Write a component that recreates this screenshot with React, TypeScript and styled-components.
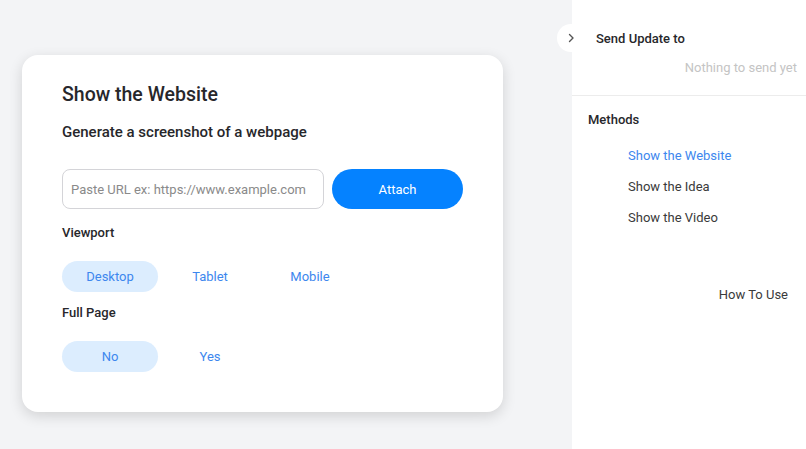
import styled, { createGlobalStyle } from "styled-components";

const GlobalStyle = createGlobalStyle`
  html, body {
    margin: 0;
    padding: 0;
    font-family: Roboto, "Liberation Sans", Arial, sans-serif;
  }
  * { box-sizing: border-box; }
`;

const Wrapper = styled.div`
  width: 806px;
  height: 449px;
  display: flex;
  background-color: #f3f4f6;
  overflow: hidden;
`;

const Main = styled.main`
  flex: 1;
  padding: 55px 0 0 22px;
`;

const Card = styled.section`
  width: 481px;
  height: 357px;
  background: #fff;
  border-radius: 16px;
  box-shadow: 0 4px 14px rgba(0, 0, 0, 0.14);
  padding: 28px 40px 40px;
  display: flex;
  flex-direction: column;
`;

const Title = styled.h1`
  margin: 0;
  font-size: 19.5px;
  font-weight: 500;
  line-height: 24px;
  color: #27272b;
`;

const Subtitle = styled.h2`
  margin: 13px 0 0;
  font-size: 15px;
  font-weight: 500;
  line-height: 24px;
  color: #27272b;
`;

const UrlRow = styled.div`
  display: flex;
  gap: 8px;
  margin-top: 25px;
`;

const UrlInput = styled.input`
  width: 262px;
  height: 40px;
  border: 1px solid #d4d4d8;
  border-radius: 8px;
  padding: 0 8px;
  font-family: inherit;
  font-size: 13px;
  color: #333;
  outline: none;
  &::placeholder { color: #8a8a8a; }
`;

const AttachButton = styled.button`
  width: 131px;
  height: 40px;
  border: none;
  border-radius: 20px;
  background: #0582ff;
  color: #fff;
  font-family: inherit;
  font-size: 13px;
`;

const Label = styled.div<{ $gap: number }>`
  margin-top: ${(p) => p.$gap}px;
  font-size: 13px;
  font-weight: 500;
  line-height: 16px;
  color: #27272b;
`;

const Segment = styled.div`
  display: flex;
  gap: 4px;
  margin-top: 20px;
`;

const Pill = styled.button<{ $active?: boolean }>`
  width: 96px;
  height: 31px;
  border: none;
  border-radius: 16px;
  background: ${(p) => (p.$active ? "#dcedfe" : "transparent")};
  color: #3d87ee;
  font-family: inherit;
  font-size: 13px;
`;

const Sidebar = styled.aside`
  position: relative;
  width: 234px;
  background: #fff;
  display: flex;
  flex-direction: column;
`;

const Toggle = styled.div`
  position: absolute;
  left: -15px;
  top: 24px;
  width: 28px;
  height: 28px;
  border-radius: 50%;
  background: #fff;
  display: flex;
  align-items: center;
  justify-content: center;
`;

const SendBlock = styled.div`
  padding: 31px 9px 0 24px;
  height: 96px;
  border-bottom: 1px solid #ececec;
`;

const SectionTitle = styled.div`
  font-size: 13px;
  font-weight: 500;
  line-height: 16px;
  color: #27272b;
`;

const Empty = styled.div`
  margin-top: 13px;
  text-align: right;
  font-size: 13px;
  line-height: 16px;
  color: #c4c4c4;
`;

const MethodsBlock = styled.div`
  padding: 16px 18px 0 16px;
  display: flex;
  flex-direction: column;
`;

const MethodList = styled.ul`
  list-style: none;
  margin: 20px 0 0;
  padding: 0 0 0 40px;
  display: flex;
  flex-direction: column;
  gap: 15px;
`;

const MethodItem = styled.li<{ $active?: boolean }>`
  font-size: 13px;
  line-height: 16px;
  color: ${(p) => (p.$active ? "#3d87ee" : "#3a3a3a")};
`;

const HowTo = styled.div`
  margin-top: 61px;
  text-align: right;
  font-size: 13px;
  line-height: 16px;
  color: #3a3a3a;
`;

const App = () => {
  return (
    <Wrapper>
      <GlobalStyle />
      <Main>
        <Card>
          <Title>Show the Website</Title>
          <Subtitle>Generate a screenshot of a webpage</Subtitle>
          <UrlRow>
            <UrlInput placeholder="Paste URL ex: https://www.example.com" />
            <AttachButton>Attach</AttachButton>
          </UrlRow>
          <Label $gap={16}>Viewport</Label>
          <Segment>
            <Pill $active>Desktop</Pill>
            <Pill>Tablet</Pill>
            <Pill>Mobile</Pill>
          </Segment>
          <Label $gap={13}>Full Page</Label>
          <Segment>
            <Pill $active>No</Pill>
            <Pill>Yes</Pill>
          </Segment>
        </Card>
      </Main>
      <Sidebar>
        <Toggle>
          <svg width="12" height="12" viewBox="0 0 12 12" fill="none">
            <path d="M4.5 2.5 L8 6 L4.5 9.5" stroke="#555" strokeWidth="1.4" strokeLinecap="round" strokeLinejoin="round" />
          </svg>
        </Toggle>
        <SendBlock>
          <SectionTitle>Send Update to</SectionTitle>
          <Empty>Nothing to send yet</Empty>
        </SendBlock>
        <MethodsBlock>
          <SectionTitle>Methods</SectionTitle>
          <MethodList>
            <MethodItem $active>Show the Website</MethodItem>
            <MethodItem>Show the Idea</MethodItem>
            <MethodItem>Show the Video</MethodItem>
          </MethodList>
          <HowTo>How To Use</HowTo>
        </MethodsBlock>
      </Sidebar>
    </Wrapper>
  );
};

export default App;
